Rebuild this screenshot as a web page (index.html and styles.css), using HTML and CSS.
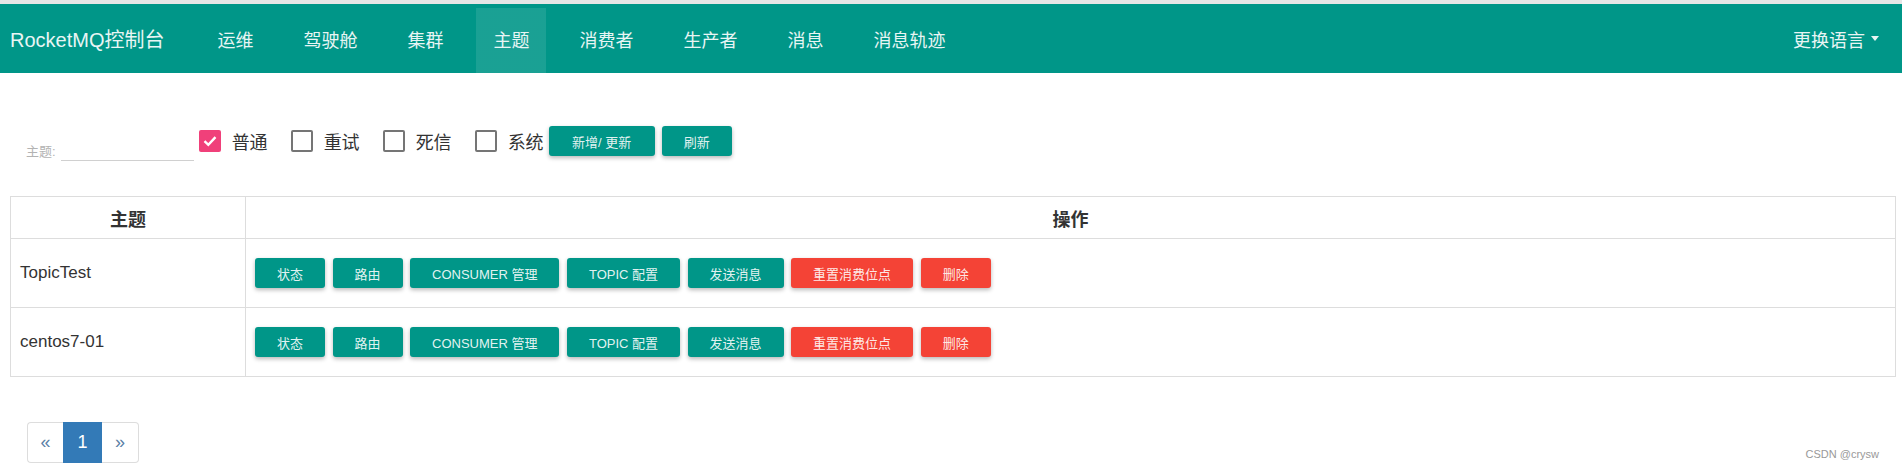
FILE: index.html
```html
<!DOCTYPE html>
<html lang="zh-CN">
<head>
    <meta charset="UTF-8">
    <title>RocketMQ控制台</title>
    <link rel="stylesheet" href="styles.css">
</head>
<body>

<div class="top-line"></div>

<div class="navbar">
    <div class="brand">RocketMQ控制台</div>
    <ul class="nav">
        <li><a>运维</a></li>
        <li><a>驾驶舱</a></li>
        <li><a>集群</a></li>
        <li class="active"><a>主题</a></li>
        <li><a>消费者</a></li>
        <li><a>生产者</a></li>
        <li><a>消息</a></li>
        <li><a>消息轨迹</a></li>
    </ul>
    <div class="lang">更换语言 <span class="caret"></span></div>
</div>

<div class="toolbar">
    <div class="topic-field">
        <label>主题:</label>
        <input type="text">
    </div>
    <div class="check-item">
        <span class="check checked">
            <svg width="16" height="16" viewBox="0 0 16 16"><path d="M2.5 8.2 L6.3 11.8 L13.5 4.2" fill="none" stroke="#fff" stroke-width="2.4"/></svg>
        </span>
        <span>普通</span>
    </div>
    <div class="check-item"><span class="check"></span><span>重试</span></div>
    <div class="check-item"><span class="check"></span><span>死信</span></div>
    <div class="check-item last"><span class="check"></span><span>系统</span></div>
    <button class="btn btn-add">新增/ 更新</button>
    <button class="btn">刷新</button>
</div>

<table class="topic-table">
    <thead>
    <tr>
        <th class="col-topic">主题</th>
        <th>操作</th>
    </tr>
    </thead>
    <tbody>
    <tr>
        <td>TopicTest</td>
        <td>
            <div class="actions">
                <button class="btn">状态</button>
                <button class="btn">路由</button>
                <button class="btn">CONSUMER 管理</button>
                <button class="btn">TOPIC 配置</button>
                <button class="btn">发送消息</button>
                <button class="btn red">重置消费位点</button>
                <button class="btn red">删除</button>
            </div>
        </td>
    </tr>
    <tr>
        <td>centos7-01</td>
        <td>
            <div class="actions">
                <button class="btn">状态</button>
                <button class="btn">路由</button>
                <button class="btn">CONSUMER 管理</button>
                <button class="btn">TOPIC 配置</button>
                <button class="btn">发送消息</button>
                <button class="btn red">重置消费位点</button>
                <button class="btn red">删除</button>
            </div>
        </td>
    </tr>
    </tbody>
</table>

<ul class="pagination">
    <li class="prev">&laquo;</li>
    <li class="current">1</li>
    <li class="next">&raquo;</li>
</ul>

<div class="watermark">CSDN @crysw</div>

</body>
</html>
```

FILE: styles.css
```css
*{
    margin: 0;
    padding: 0;
    box-sizing: border-box;
}

body{
    position: relative;
    height: 469px;
    overflow: hidden;
    font-family: "Liberation Sans", "Noto Sans CJK SC", sans-serif;
    color: #333;
    background: #fff;
}

.top-line{
    height: 4px;
    background-color: #e6e6e6;
}

/* 顶部导航 */
.navbar{
    display: flex;
    height: 69px;
    background-color: #009688;
    color: #e8f5f4;
}

.brand{
    display: flex;
    align-items: center;
    padding: 0 28px 0 10px;
    font-size: 20px;
}

.nav{
    display: flex;
    list-style: none;
}

.nav li{
    margin: 0 8px;
}

.nav a{
    display: flex;
    align-items: center;
    height: 100%;
    padding: 0 17px;
    font-size: 18px;
}

.nav .active a{
    background: linear-gradient(transparent 4px, rgba(255, 255, 255, .1) 4px);
}

.lang{
    display: flex;
    align-items: center;
    margin-left: auto;
    padding-right: 23px;
    font-size: 18px;
}

.caret{
    display: inline-block;
    margin-left: 6px;
    border-top: 5px solid #e8f5f4;
    border-left: 4px solid transparent;
    border-right: 4px solid transparent;
}

/* 查询条件 */
.toolbar{
    display: flex;
    align-items: center;
    height: 30px;
    margin-top: 53px;
    padding-left: 26px;
}

.topic-field{
    display: flex;
    align-items: flex-end;
    align-self: flex-end;
    margin-bottom: -5px;
    margin-right: 5px;
}

.topic-field label{
    font-size: 13px;
    line-height: 16px;
    padding-bottom: 1px;
    color: #b3b3b3;
}

.topic-field input{
    width: 133px;
    height: 26px;
    margin-left: 5px;
    border: none;
    border-bottom: 1px solid #d0d0d0;
    outline: none;
}

.check-item{
    display: flex;
    align-items: center;
    margin-right: 23px;
    font-size: 18px;
    color: #333;
}

.check-item.last{
    margin-right: 5px;
}

.check{
    display: flex;
    align-items: center;
    justify-content: center;
    width: 22px;
    height: 22px;
    margin-right: 11px;
    border: 2px solid #757575;
    border-radius: 2px;
}

.check.checked{
    border: none;
    background-color: #f0407a;
}

.btn{
    height: 30px;
    padding: 0 22px;
    border: none;
    border-radius: 3px;
    background-color: #009688;
    color: rgba(255, 255, 255, .9);
    font-family: "Liberation Sans", "Noto Sans CJK SC", sans-serif;
    font-size: 13px;
    box-shadow: 0 2px 4px rgba(0, 0, 0, .28);
    white-space: nowrap;
}

.toolbar .btn{
    margin-right: 7px;
}

.toolbar .btn-add{
    width: 106px;
    padding: 0;
}

.btn.red{
    background-color: #f44336;
}

/* 主题列表 */
.topic-table{
    width: calc(100% - 16px);
    margin: 40px 6px 0 10px;
    border-collapse: collapse;
}

.topic-table th,
.topic-table td{
    border: 1px solid #ddd;
}

.topic-table th{
    height: 42px;
    font-size: 18px;
    font-weight: bold;
    text-align: center;
}

.col-topic{
    width: 235px;
}

.topic-table td{
    height: 69px;
    padding: 0 9px;
    font-size: 17px;
}

.actions{
    display: flex;
    gap: 7.5px;
}

/* 分页 */
.pagination{
    display: flex;
    list-style: none;
    margin: 45px 0 0 27px;
}

.pagination li{
    display: flex;
    align-items: center;
    justify-content: center;
    height: 41px;
    font-size: 18px;
    border: 1px solid #ddd;
    color: #5b7fa6;
}

.pagination .prev{
    width: 36px;
    border-radius: 4px 0 0 4px;
    border-right: none;
}

.pagination .current{
    width: 39px;
    background-color: #337ab7;
    border-color: #337ab7;
    color: #fff;
}

.pagination .next{
    width: 37px;
    border-radius: 0 4px 4px 0;
    border-left: none;
}

.watermark{
    position: absolute;
    right: 23px;
    bottom: 9px;
    font-size: 11px;
    color: #999;
}
```
